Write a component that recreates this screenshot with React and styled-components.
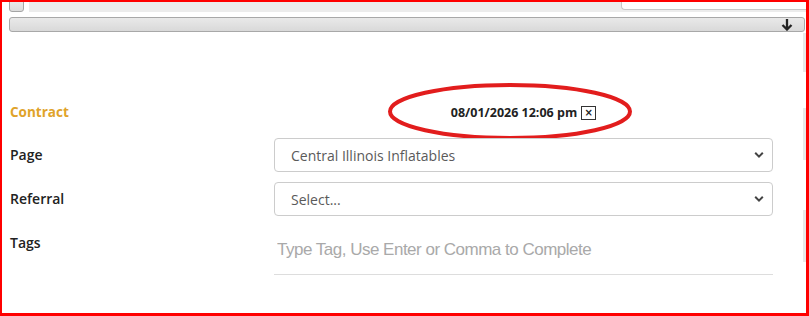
import React from 'react';
import styled, { createGlobalStyle } from 'styled-components';

const GlobalStyle = createGlobalStyle`
  html, body {
    margin: 0;
    padding: 0;
    background: #ffffff;
  }
  body {
    font-family: 'Open Sans', 'Liberation Sans', sans-serif;
  }
`;

const Frame = styled.div`
  width: 809px;
  height: 316px;
  box-sizing: border-box;
  border-style: solid;
  border-color: #ff0000;
  border-width: 2px 3px 3px 2px;
  overflow: hidden;
  background: #ffffff;
  display: flex;
  flex-direction: column;
`;

const TopStrip = styled.div`
  display: flex;
  align-items: flex-end;
  gap: 5px;
  height: 10px;
  padding-left: 7px;
  overflow: hidden;
  flex-shrink: 0;
`;

const Checkbox = styled.div`
  width: 15px;
  height: 16px;
  box-sizing: border-box;
  border: 1px solid #a5a5a5;
  border-radius: 3px;
  background: linear-gradient(#f0f0f0, #dcdcdc);
  flex-shrink: 0;
`;

const GrayBar = styled.div`
  flex: 1;
  height: 10px;
  background: #ececec;
  display: flex;
  justify-content: flex-end;
  align-items: flex-start;
`;

const WhiteTab = styled.div`
  width: 184px;
  height: 7px;
  background: #ffffff;
  border-left: 1px solid #c8c8c8;
  border-bottom: 1px solid #c8c8c8;
  border-bottom-left-radius: 4px;
`;

const ScrollBar = styled.div`
  margin: 5px 1px 0 7px;
  height: 15px;
  box-sizing: border-box;
  border: 1px solid #a8a8a8;
  border-radius: 3px;
  background: linear-gradient(#e9e9e9, #d9d9d9);
  display: flex;
  justify-content: flex-end;
  align-items: center;
  padding-right: 11px;
  flex-shrink: 0;
`;

const Body = styled.div`
  flex: 1;
  display: flex;
`;

const Form = styled.div`
  padding: 65px 0 0 8px;
  display: grid;
  grid-template-columns: 264px 499px;
  grid-auto-rows: min-content;
  row-gap: 10px;
  align-content: start;
`;

const Label = styled.div`
  font-family: 'Open Sans', 'Liberation Sans', sans-serif;
  font-size: ${({ size }) => size || '14px'};
  font-weight: ${({ strong }) => (strong ? 700 : 600)};
  color: ${({ accent }) => accent || '#222222'};
  line-height: ${({ lh }) => lh || '34px'};
  align-self: start;
`;

const DateCell = styled.div`
  position: relative;
  height: 31px;
  display: flex;
  justify-content: center;
  align-items: center;
  gap: 4px;
  margin-bottom: -2px;
`;

const DateText = styled.span`
  font-size: 12.5px;
  font-weight: 700;
  color: #222222;
`;

const ClearBox = styled.span`
  width: 13px;
  height: 12px;
  border: 1.5px solid #333333;
  display: flex;
  align-items: center;
  justify-content: center;
  font-family: 'DejaVu Sans', sans-serif;
  font-size: 10px;
  font-weight: 700;
  line-height: 1;
  color: #222222;
`;

const Ellipse = styled.svg`
  position: absolute;
  left: 114px;
  top: -14px;
  width: 244px;
  height: 57px;
  overflow: visible;
  pointer-events: none;
`;

const SelectWrap = styled.div`
  position: relative;
  height: 34px;
`;

const Select = styled.select`
  appearance: none;
  width: 100%;
  height: 34px;
  box-sizing: border-box;
  border: 1px solid #cccccc;
  border-radius: 4px;
  background: #ffffff;
  padding: 0 30px 0 16px;
  font-family: 'Open Sans', 'Liberation Sans', sans-serif;
  font-size: 14px;
  color: #5a5a5a;
  outline: none;
`;

const Chevron = styled.svg`
  position: absolute;
  right: 9px;
  top: 13px;
  width: 10px;
  height: 8px;
  pointer-events: none;
`;

const TagInput = styled.input`
  height: 49px;
  box-sizing: border-box;
  border: none;
  border-bottom: 1px solid #dddddd;
  padding: 0 0 0 3px;
  font-family: 'Liberation Sans Narrow', 'Liberation Sans', sans-serif;
  font-size: 17px;
  letter-spacing: -0.5px;
  outline: none;
  &::placeholder {
    color: #a9a9a9;
  }
`;

const Rail = styled.div`
  margin-left: auto;
  width: 3px;
  display: flex;
  flex-direction: column;
`;

const RailSegment = styled.div`
  height: ${({ h }) => h}px;
  margin-top: ${({ gap }) => gap}px;
  background: #e8e8e8;
`;

const ArrowDown = () => (
  <svg width="12" height="13" viewBox="0 0 12 13">
    <path d="M6 1 V11.5 M1.5 7 L6 11.5 L10.5 7" fill="none" stroke="#222" strokeWidth="2.3" />
  </svg>
);

const ChevronIcon = () => (
  <Chevron viewBox="0 0 10 8">
    <path d="M1.2 1.8 L5 5.6 L8.8 1.8" fill="none" stroke="#444" strokeWidth="2" />
  </Chevron>
);

const Dropdown = ({ value, options }) => (
  <SelectWrap>
    <Select defaultValue={value}>
      {options.map((o) => (
        <option key={o} value={o}>
          {o}
        </option>
      ))}
    </Select>
    <ChevronIcon />
  </SelectWrap>
);

export default function App() {
  return (
    <>
      <GlobalStyle />
      <Frame>
        <TopStrip>
          <Checkbox />
          <GrayBar>
            <WhiteTab />
          </GrayBar>
        </TopStrip>
        <ScrollBar>
          <ArrowDown />
        </ScrollBar>
        <Body>
          <Form>
            <Label strong size="13.5px" accent="#e0a32a" lh="31px">Contract</Label>
            <DateCell>
              <DateText>08/01/2026 12:06 pm</DateText>
              <ClearBox>×</ClearBox>
              <Ellipse viewBox="0 0 244 57">
                <ellipse cx="122" cy="28.5" rx="120" ry="26.5" fill="none" stroke="#e21d1d" strokeWidth="4" />
              </Ellipse>
            </DateCell>

            <Label>Page</Label>
            <Dropdown value="Central Illinois Inflatables" options={['Central Illinois Inflatables']} />

            <Label>Referral</Label>
            <Dropdown value="Select..." options={['Select...']} />

            <Label>Tags</Label>
            <TagInput placeholder="Type Tag, Use Enter or Comma to Complete" />
          </Form>
          <Rail>
            <RailSegment h={39} gap={1} />
            <RailSegment h={52} gap={36} />
            <RailSegment h={52} gap={50} />
          </Rail>
        </Body>
      </Frame>
    </>
  );
}
